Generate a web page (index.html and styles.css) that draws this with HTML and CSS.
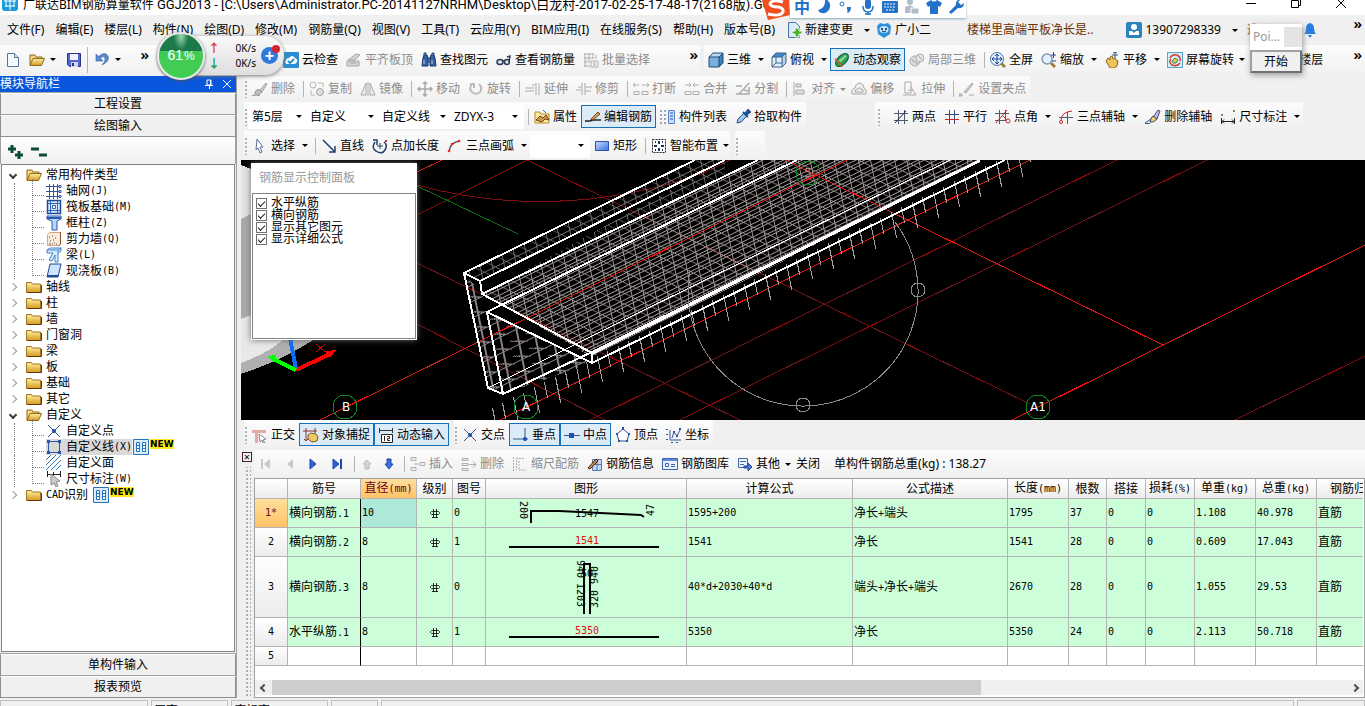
FILE: index.html
```html
<!DOCTYPE html>
<html lang="zh-CN">
<head>
<meta charset="utf-8">
<title>广联达BIM钢筋算量软件 GGJ2013</title>
<link rel="stylesheet" href="styles.css">
</head>

<body>
<!-- 图标库 -->
<svg class="sprite">
	<defs>
		<linearGradient id="gold" x2="0" y2="1"><stop offset="0" stop-color="#fff0a8"/><stop offset="1" stop-color="#d99a1e"/></linearGradient>
		<linearGradient id="blue" x2="1" y2="1"><stop offset="0" stop-color="#c9dcff"/><stop offset="1" stop-color="#3a6fe0"/></linearGradient>
	</defs>
	<symbol id="logo" viewBox="0 0 16 16"><rect width="16" height="16" rx="3" fill="#1c9bd8"/><path d="M8 1v14M2 6h12M3 11h10M4 4v8M12 4v8" stroke="#fff" fill="none"/></symbol>
	<symbol id="new" viewBox="0 0 16 16"><path d="M2.500 1.500h7l4 4v9h-11z" fill="#f4f9ff" stroke="#5a7394"/><path d="M9.500 1.500v4h4" fill="#cfe0f4" stroke="#5a7394"/></symbol>
	<symbol id="open" viewBox="0 0 16 16"><path d="M1 13V3h5l1 2h6v2" fill="#f6d77c" stroke="#8d6a1a"/><path d="M1 13.500l3-7h11.500l-3 7z" fill="url(#gold)" stroke="#8d6a1a"/></symbol>
	<symbol id="save" viewBox="0 0 16 16"><path d="M1.500 1.500h13v13h-11l-2-2z" fill="#5267c9" stroke="#28358a"/><path d="M4 2h8v6H4z" fill="#eef2ff"/><path d="M5 10h7v5H5z" fill="#cfd5e8"/><path d="M6 11h2v3H6z" fill="#28358a"/></symbol>
	<symbol id="undo" viewBox="0 0 16 16"><path d="M2 2v7h7l-2.500-2.500Q10 3 11 6q1 3-3 7 8-4 6-9Q11-1 4.500 4.500z" fill="#5b8ad0" stroke="#2f5c9e" stroke-width=".6"/></symbol>
	<symbol id="cloud" viewBox="0 0 16 16"><rect width="16" height="16" rx="1" fill="#2a8fd0"/><path d="M4 12q-3-1-1-4 0-2 3-2 3-4 6 0 3 1 2 4-1 2-3 2z" fill="#fff"/><path d="M5 9l2 2 4-4" fill="none" stroke="#2a8fd0" stroke-width="2"/></symbol>
	<symbol id="slab" viewBox="0 0 16 16"><path d="M1 14h12V9H1zM2 8l8-6 4 1-5 5zM4 11h6" fill="#d4d4d4" stroke="#a6a6a6"/></symbol>
	<symbol id="find" viewBox="0 0 16 16"><path d="M1 14l1-8 1-3h3l1 3v8zM9 14V6l1-3h3l1 3 1 8z" fill="#355f9f" stroke="#1d3a6a"/><path d="M7 6h2v4H7zM3 3V1h2v2M11 3V1h2v2" fill="#7aa2dc" stroke="#1d3a6a"/><path d="M3 8v4M11 8v4" stroke="#b7d2f5"/></symbol>
	<symbol id="glasses" viewBox="0 0 16 16"><ellipse cx="4" cy="10" rx="3" ry="2.500" fill="#dce8f4" stroke="#2d3c55" stroke-width="1.500"/><ellipse cx="11" cy="10" rx="2.500" ry="2.500" fill="#dce8f4" stroke="#2d3c55" stroke-width="1.500"/><path d="M7 9h2M13 10l1-6-3 1" fill="none" stroke="#2d3c55" stroke-width="1.500"/></symbol>
	<symbol id="batch" viewBox="0 0 16 16"><path d="M1 2h10M1 6h9M1 10h6M1 14h6M2 1v14M6 1v8M10 1v6M8 9h7v6H8zM10 11h3M10 13h3M13 3v4" fill="none" stroke="#adadad"/></symbol>
	<symbol id="cube" viewBox="0 0 16 16"><path d="M1 5l4-4h10l-4 4z" fill="#b7d9f3"/><path d="M1 5h10v10H1z" fill="#78b0e0"/><path d="M11 5l4-4v10l-4 4z" fill="#3f7fb8"/><path d="M1 5l4-4h10v10l-4 4H1zM1 5h10v10M11 5l4-4" fill="none" stroke="#214a73"/></symbol>
	<symbol id="topview" viewBox="0 0 16 16"><path d="M1 5l4-4h10l-4 4z" fill="#3f88c6"/><path d="M1 5h10v10H1z" fill="#e2eff9"/><path d="M11 5l4-4v10l-4 4z" fill="#b7cfe4"/><path d="M1 5l4-4h10v10l-4 4H1zM1 5h10v10M11 5l4-4M5 5v6h6M5 11l-4 4" fill="none" stroke="#3a648f"/></symbol>
	<symbol id="orbit" viewBox="0 0 16 16"><ellipse cx="8" cy="8" rx="8" ry="4.500" transform="rotate(-45 8 8)" fill="#2d9a55" stroke="#176338"/><path d="M4 9l7-6 2 1-6 6z" fill="#7be09a"/><path d="M1 7q5 3 7 8" fill="none" stroke="#d9542b" stroke-width="1.500"/></symbol>
	<symbol id="local3d" viewBox="0 0 16 16"><circle cx="6" cy="9" r="5" fill="#d9d9d9" stroke="#b0b0b0"/><circle cx="11" cy="6" r="4" fill="#e8e8e8" stroke="#b0b0b0"/><path d="M3 8l6 4M9 3l4 5" stroke="#a0a0a0"/></symbol>
	<symbol id="full" viewBox="0 0 16 16"><path d="M11 11l4 4" stroke="#a87a3c" stroke-width="3"/><circle cx="7" cy="7" r="6.500" fill="#e2f0ff" stroke="#54749c"/><path d="M7 2v10M2 7h10M5 4l2-2 2 2M5 10l2 2 2-2M4 5L2 7l2 2M10 5l2 2-2 2" fill="none" stroke="#1d4796"/></symbol>
	<symbol id="zoom" viewBox="0 0 16 16"><path d="M10 11l4 4" stroke="#a87a3c" stroke-width="3"/><circle cx="6" cy="7" r="5" fill="#e2f0ff" stroke="#8598b0" stroke-width="1.500"/><path d="M10 3h5M12.500 0v6M11 9h4" stroke="#1d4796"/></symbol>
	<symbol id="pan" viewBox="0 0 16 16"><path d="M2 9l2-3 2 2V5l2-1 1 3 2-1 1 2 2 1-1 5-3 2H6z" fill="#eec35c" stroke="#8d6320"/><path d="M11 0v6M8 3h6M9 1l2-1 2 1" stroke="#3b548b" fill="none"/></symbol>
	<symbol id="rotscr" viewBox="0 0 16 16"><rect x=".5" y=".5" width="15" height="15" fill="#cfeefa" stroke="#58a9c8"/><path d="M3 6q2-4 7-3 4 2 3 6M13 11q-3 4-8 2-4-3-1-6" fill="none" stroke="#da3c2f" stroke-width="1.500"/><path d="M5 9l3-3 3 2-2 3H6z" fill="#e9c14c" stroke="#3b8a45"/></symbol>
	<symbol id="brush" viewBox="0 0 16 16"><path d="M8 9l6-7 1 1-5 8z" fill="#ccc" stroke="#a5a5a5"/><path d="M3 14q-1-4 3-6l4 3q-3 4-7 3z" fill="#bdbdbd" stroke="#9b9b9b"/><path d="M0 14.500h3M5 14.500h3" stroke="#9b9b9b"/></symbol>
	<symbol id="copy" viewBox="0 0 16 16"><circle cx="4" cy="4" r="3" fill="none" stroke="#b5b5b5"/><circle cx="11" cy="11" r="3.500" fill="#ddd" stroke="#a5a5a5"/><path d="M9 2h5v4M2 9v5h4" fill="none" stroke="#b5b5b5"/></symbol>
	<symbol id="mirror" viewBox="0 0 16 16"><path d="M6 2v12H1zM10 2v12h5z" fill="#eee" stroke="#aaa"/><path d="M8 1v14" stroke="#aaa"/></symbol>
	<symbol id="move" viewBox="0 0 16 16"><path d="M8 1v14M1 8h14M6 3l2-2 2 2M6 13l2 2 2-2M3 6L1 8l2 2M13 6l2 2-2 2" fill="none" stroke="#aaa" stroke-width="1.500"/></symbol>
	<symbol id="rotate" viewBox="0 0 16 16"><path d="M4 3q-3 4-1 7 4 5 9 1 3-4-1-8M2 3h4v4" fill="none" stroke="#bbb" stroke-width="2"/></symbol>
	<symbol id="extend" viewBox="0 0 16 16"><path d="M0 7h9M0 10h9M11 2v12M14 2v12M7 4h3" stroke="#aaa"/></symbol>
	<symbol id="trim" viewBox="0 0 16 16"><path d="M0 9h5M9 6h7M9 10h6M6 2v12M9 2v12M2 6h3" stroke="#aaa"/></symbol>
	<symbol id="break" viewBox="0 0 16 16"><path d="M0 4h6M9 4h7M2 2L0 4l2 2M14 2l2 2-2 2M1 10.500h5v3H1zM9 10.500h6v3H9z" fill="none" stroke="#b0b0b0"/></symbol>
	<symbol id="merge" viewBox="0 0 16 16"><path d="M1 4h6M9 4h6M5 2l2 2-2 2M11 2L9 4l2 2M1 10.500h6v3H1zM9 10.500h6v3H9z" fill="none" stroke="#b0b0b0"/></symbol>
	<symbol id="split" viewBox="0 0 16 16"><path d="M1 5h6M1 13h13V6M4 13L14 2M9 9l4 1" fill="none" stroke="#aaa" stroke-width="1.500"/></symbol>
	<symbol id="align" viewBox="0 0 16 16"><path d="M2 1v14M4 3h5v3H4zM4 9h8v4H4z" fill="#ddd" stroke="#aaa"/></symbol>
	<symbol id="offset" viewBox="0 0 16 16"><path d="M1 13q-1-5 3-6 1-5 5-5 4 1 4 5 3 1 2 6z" fill="#eee" stroke="#aaa"/><path d="M4 11q0-3 3-3 1-3 3 0 3 0 2 3z" fill="none" stroke="#aaa"/></symbol>
	<symbol id="stretch" viewBox="0 0 16 16"><path d="M3 1h6v11H3zM9 6l5 8H1M6 9h5" fill="none" stroke="#aaa"/></symbol>
	<symbol id="grippt" viewBox="0 0 16 16"><path d="M5 11l8-9 1 1-7 9zM0 13h3v2H0zM10 14h5" fill="#ccc" stroke="#aaa"/></symbol>
	<symbol id="prop" viewBox="0 0 16 16"><path d="M1 3h5l1 2h8v9H1z" fill="#ffe9a2" stroke="#b58b2c"/><path d="M2 11l4-4 3 2 3-3 3 5-4-1-3 3z" fill="#cf9a4e" stroke="#6b4516"/><path d="M9 1l3 3" stroke="#3465a4"/></symbol>
	<symbol id="editbar" viewBox="0 0 16 16"><path d="M0 12h5l3-1h8" fill="none" stroke="#222" stroke-width="1.500"/><path d="M6 10l7-7 2 2-7 6z" fill="#d8a060" stroke="#69451c"/><path d="M5 11l2-2 1 2z" fill="#c22"/></symbol>
	<symbol id="list" viewBox="0 0 16 16"><path d="M0 2h2M0 6h2M0 10h2M0 14h2M4 2h2M4 6h2M4 10h2M4 14h2" stroke="#44587a"/><path d="M8.500 1.500h6v13h-6z" fill="#cadffd" stroke="#5884c8"/><path d="M10 4h3M10 7h3M10 10h3" stroke="#2b57a5"/></symbol>
	<symbol id="pick" viewBox="0 0 16 16"><path d="M2 14l1-4 6-6 3 3-6 6z" fill="#9cc6ee" stroke="#28517e"/><path d="M8 3l5 5M10 5l3-4 2 2-4 3" fill="#1d4f94" stroke="#1d4f94" stroke-width="2"/></symbol>
	<symbol id="ax1" viewBox="0 0 16 16"><path d="M1 4.500h14M1 11.500h14M5.500 1v14M11.500 1v14" stroke="#4b5876"/><path d="M2 14L13 2" stroke="#222"/></symbol>
	<symbol id="ax2" viewBox="0 0 16 16"><path d="M1 5.500h14M5.500 1v14M10.500 1v14" stroke="#354a7e"/><path d="M1 10.500h14" stroke="#c22"/></symbol>
	<symbol id="ax3" viewBox="0 0 16 16"><path d="M0 4.500h14M0 11.500h12M4.500 1v14M10.500 1v11" stroke="#4b5876"/><path d="M1 14L12 1M8 7l4 4" stroke="#c22"/><circle cx="13" cy="12" r="2" fill="#fff" stroke="#c22"/></symbol>
	<symbol id="ax4" viewBox="0 0 16 16"><path d="M3 12q0-9 11-10" fill="none" stroke="#c22"/><path d="M1 8.500h14M9.500 3v12" stroke="#4b5876"/><circle cx="3" cy="13" r="1.500" fill="#fff" stroke="#c22"/></symbol>
	<symbol id="axdel" viewBox="0 0 16 16"><path d="M8 8l5-7 2 1-3 8z" fill="#c8b5e0" stroke="#4c4c7c"/><path d="M5 13q1-5 3-6l4 3q-3 4-7 3z" fill="#e4d47b" stroke="#454545"/><path d="M0 14l6-4M0 14.500h5" stroke="#2b57a5"/></symbol>
	<symbol id="dim" viewBox="0 0 16 16"><path d="M1.500 9v6M14.500 9v6M2 12.500h12M4 10.500l-2 2 2 2M12 10.500l2 2-2 2" fill="none" stroke="#222"/><path d="M1 5h2v2H1zM13 1h2v2h-2z" fill="#5a9a4c"/></symbol>
	<symbol id="cursor" viewBox="0 0 16 16"><path d="M5 1l6 8H8l2 5-2 1-2-5-2 2z" fill="#fff" stroke="#5a6f94"/></symbol>
	<symbol id="line" viewBox="0 0 16 16"><path d="M2 2l11 11M14 8v6H8" fill="none" stroke="#20406f" stroke-width="1.500"/></symbol>
	<symbol id="ptlen" viewBox="0 0 16 16"><path d="M3 4q-4 6 1 9 6 4 9-1 3-5-1-8M1 2h4v5" fill="none" stroke="#243f6b" stroke-width="1.500"/><path d="M5 8h6M8 5v6" stroke="#243f6b"/><path d="M13 2h2v2h-2z" fill="#c22"/></symbol>
	<symbol id="arc" viewBox="0 0 16 16"><path d="M2 14Q3 4 13 3" fill="none" stroke="#555" stroke-width="1.500"/><circle cx="2" cy="13" r="1.300" fill="#e22"/><circle cx="5" cy="6" r="1.300" fill="#e22"/><circle cx="12" cy="3" r="1.300" fill="#e22"/></symbol>
	<symbol id="rect" viewBox="0 0 16 16"><path d="M1.500 3.500h13v9h-13z" fill="url(#blue)" stroke="#2f52a8"/></symbol>
	<symbol id="smart" viewBox="0 0 16 16"><path d="M1.500 1.500h13v13h-13z" fill="#fff" stroke="#222" stroke-dasharray="2 1"/><path d="M8 3v3M8 10v3M3 8h3M10 8h3" stroke="#1d3867" stroke-width="2"/><path d="M4 4h1M11 4h1M4 12h1M11 12h1" stroke="#1d3867" stroke-width="2"/></symbol>
	<symbol id="ortho" viewBox="0 0 16 16"><path d="M0 3h14v3H6v10H3V6H0z" fill="#e2a8a2"/><path d="M7 7l7 5-3 1 2 3-2 0-1-3-2 2z" fill="#fff" stroke="#888"/></symbol>
	<symbol id="snap" viewBox="0 0 16 16"><path d="M5 8l3-2 5 1 2 3-1 4-5 1-4-3z" fill="#eec96c" stroke="#7c5a1e"/><path d="M3 1v13M0 4h14M1 12l2 2 2-2M12 1v5" fill="none" stroke="#8c3030"/></symbol>
	<symbol id="dyn" viewBox="0 0 16 16"><path d="M1.500 1v5M14.500 1v5M1 3.500h14" stroke="#333"/><path d="M3.500 7.500h11v8h-11z" fill="#fff" stroke="#222"/><path d="M6.500 9v5M9 9.500h2.500v2H9.500v2H12" fill="none" stroke="#222"/></symbol>
	<symbol id="cross" viewBox="0 0 16 16"><path d="M2 2l12 12M14 2L2 14" stroke="#35538c"/><circle cx="8" cy="8" r="2" fill="#1c4fae"/></symbol>
	<symbol id="perp" viewBox="0 0 16 16"><path d="M0 12h15M12 1v13" stroke="#35538c"/><circle cx="12" cy="12" r="2" fill="#1c4fae"/></symbol>
	<symbol id="mid" viewBox="0 0 16 16"><path d="M0 8.500h16" stroke="#35538c"/><path d="M5 6h5v5H5z" fill="#1c4fae"/></symbol>
	<symbol id="vertex" viewBox="0 0 16 16"><path d="M8 2l6 5-2 7H4L2 7z" fill="#fff" stroke="#35538c"/><path d="M7 0h2v3H7zM1 6h2v2H1zM13 6h2v2h-2zM3 13h2v2H3zM11 13h2v2h-2z" fill="#2255aa"/></symbol>
	<symbol id="coord" viewBox="0 0 16 16"><path d="M4 3v10h11M6 11l2-6 3 4 3-6" fill="none" stroke="#35538c"/><path d="M0 2h2v1H0zM0 7h2v1H0zM0 12h2v1H0zM5 15h2v1H5zM10 15h2v1h-2zM13 1h2v2h-2zM7 4h2v2H7zM10 8h2v2h-2z" fill="#2255aa"/></symbol>
	<symbol id="first" viewBox="0 0 16 16"><path d="M3 3h2v10H3zM12 3v10L6 8z" fill="#c8c8c8"/></symbol>
	<symbol id="prev" viewBox="0 0 16 16"><path d="M11 3v10L5 8z" fill="#c8c8c8"/></symbol>
	<symbol id="next" viewBox="0 0 16 16"><path d="M4 3v10l6-5z" fill="#2c62d6" stroke="#1c45a6"/></symbol>
	<symbol id="last" viewBox="0 0 16 16"><path d="M3 3v10l6-5z" fill="#2c62d6" stroke="#1c45a6"/><path d="M11 3v10" stroke="#1c45a6" stroke-width="2"/></symbol>
	<symbol id="up" viewBox="0 0 16 16"><path d="M8 4l4 4h-2v5H6V8H4z" fill="#d4d4d4" stroke="#bbb"/></symbol>
	<symbol id="down" viewBox="0 0 16 16"><path d="M8 13l4-5h-2V3H6v5H4z" fill="#3b72e0" stroke="#1c45a6"/></symbol>
	<symbol id="ins" viewBox="0 0 16 16"><path d="M1 1.500h5v3H1zM1 11.500h5v3H1zM10 6.500h5v3h-5zM9 8H4" fill="#eee" stroke="#b0b0b0"/></symbol>
	<symbol id="del" viewBox="0 0 16 16"><path d="M1 2.500h6v2H1zM1 7.500h6v2H1zM1 12.500h6v2H1zM8 8.500h7M12 5.500l3 3-3 3" fill="#eee" stroke="#b0b0b0"/></symbol>
	<symbol id="scale" viewBox="0 0 16 16"><path d="M1.500 1v14M4.500 4v10M4 2.500h9M7 5v9h7" fill="none" stroke="#aaa" stroke-dasharray="2 1"/></symbol>
	<symbol id="info" viewBox="0 0 16 16"><path d="M5.500 3.500h9v11h-9z" fill="#c3d6f5" stroke="#5a78ab"/><path d="M10 3v11M6 8.500h9" stroke="#5a78ab"/><path d="M1 12l8-9 2 2-8 8z" fill="#c88a4c" stroke="#3c2710"/></symbol>
	<symbol id="lib" viewBox="0 0 16 16"><path d="M.5 2.500h15v11H.5z" fill="#eaf2ff" stroke="#3c67b0"/><path d="M1 3h14v2H1z" fill="#5f8cd8"/><path d="M3.500 7.500h3v3h-3zM9 8.500h4M9 10.500h4" fill="none" stroke="#3c67b0"/></symbol>
	<symbol id="other" viewBox="0 0 16 16"><path d="M1.500 2.500h9v9h-9z" fill="#eaf2ff" stroke="#4667a5"/><path d="M3 5.500h6M3 8.500h4" stroke="#4667a5"/><path d="M7 10h4V7l4 4-4 4v-3H7z" fill="#4f80e0" stroke="#1d3f93"/></symbol>
	<symbol id="change" viewBox="0 0 16 16"><path d="M2.500.5h7l4 4v11h-11z" fill="#d8ebff" stroke="#47759f"/><path d="M9 6h4v3h3v3h-3v3H9v-3H6V9h3z" fill="#46b52c" stroke="#fff"/></symbol>
	<symbol id="robot" viewBox="0 0 16 16"><path d="M1 4l3-3 4 1 4-1 3 3-1 8-6 4-6-4z" fill="#2b91dc"/><ellipse cx="8" cy="7.500" rx="4.500" ry="3.500" fill="#bfe5ff"/><circle cx="6" cy="7" r="1" fill="#124"/><circle cx="10" cy="7" r="1" fill="#124"/><path d="M6 9q2 2 4 0" fill="none" stroke="#124"/></symbol>
	<symbol id="user" viewBox="0 0 16 16"><rect width="16" height="16" rx="2" fill="#2b83bb"/><circle cx="8" cy="5" r="3" fill="#fff"/><path d="M3 13V9h3l2 2 2-2h3v4z" fill="#fff"/></symbol>
	<symbol id="bell" viewBox="0 0 16 16"><path d="M2 12q2-2 2-6 0-4 4-5 4 1 4 5 0 4 2 6zM6 13h4l-2 3z" fill="#2a7de0"/></symbol>
	<symbol id="folder" viewBox="0 0 16 16"><path d="M.5 13.500v-10h5l1 1.500h8v8.500z" fill="url(#gold)" stroke="#a0741c"/><path d="M1 13.500h14.500V6" fill="none" stroke="#5c400c"/></symbol>
	<symbol id="grid" viewBox="0 0 16 16"><path d="M0 3.500h13M0 8.500h13M0 13.500h13M3.500 1v15M7.500 1v15M11.500 1v15" stroke="#2e58a5"/><path d="M13 2.500h2v2h-2zM13 7.500h2v2h-2zM13 12.500h2v2h-2z" fill="none" stroke="#2e58a5"/></symbol>
	<symbol id="raft" viewBox="0 0 16 16"><path d="M1.500 1.500h13v13h-13z" fill="#dcebff" stroke="#1e4b96" stroke-width="1.500"/><path d="M4.500 2v12M11.500 2v12M2 4.500h12M2 11.500h12" fill="none" stroke="#2e62b5"/><path d="M6.500 6.500h3v3h-3z" fill="#fff" stroke="#2e62b5"/></symbol>
	<symbol id="column" viewBox="0 0 16 16"><path d="M1 1h14v3l-4 2v9H6V6L1 4z" fill="#b9d6ff" stroke="#2a5ba8"/><path d="M1 3h14" stroke="#2a5ba8" stroke-width="2"/></symbol>
	<symbol id="wall" viewBox="0 0 16 16"><path d="M1.500 3.500l2-2h11v11l-2 2h-11z" fill="#fbe9dc" stroke="#d5a583"/><path d="M14.500 1v12l-2 2" fill="none" stroke="#8c4c24"/><path d="M3 6h1M6 5h1M9 7h1M4 10h1M7 9h1M3 13h2M8 12h1M10 13h1M6 13h1" stroke="#555"/></symbol>
	<symbol id="beam" viewBox="0 0 16 16"><path d="M1 3l3-2h11v3l-3 2v9H9V8l-3 6-3-1 4-7H1z" fill="#d6ebff" stroke="#3e83c8"/><path d="M1 3h11l3-2M12 3v3" fill="none" stroke="#3e83c8"/></symbol>
	<symbol id="plate" viewBox="0 0 16 16"><path d="M4 1h11l-3 13H1z" fill="#cfe2ff" stroke="#1f4c97"/><path d="M1 13h11" stroke="#1f4c97" stroke-width="2"/></symbol>
	<symbol id="cline" viewBox="0 0 16 16"><path d="M2.500 2.500h11v11h-11z" fill="none" stroke="#2e58a5"/><path d="M1 1h3v3H1zM12 1h3v3h-3zM1 12h3v3H1zM12 12h3v3h-3z" fill="#2e58a5"/></symbol>
	<symbol id="cface" viewBox="0 0 16 16"><path d="M0 5l5-5M0 10L10 0M0 15L15 0M5 15L15 5M10 15l5-5" stroke="#2e78c5"/></symbol>
	<symbol id="cdim" viewBox="0 0 16 16"><path d="M1.500 0v6M14.500 0v6M1 3.500h13M7.500 1v4" stroke="#222"/><path d="M5 3l9 7-4 1 2 4-2 1-2-4-3 2z" fill="#ccc" stroke="#888"/></symbol>
	<symbol id="book" viewBox="0 0 16 16"><path d="M.5.5h15v15H.5z" fill="#d9edff" stroke="#2673b8"/><path d="M3.500 3.500h3v9h-3zM9.500 3.500h3v9h-3zM4 6.500h3M4 9.500h3M10 6.500h3M10 9.500h3" fill="#fff" stroke="#2673b8"/></symbol>
	<symbol id="steel" viewBox="0 0 12 12"><path d="M3.500 3.500h6l1 1v1l-1 1h-7l-1-1v-1l1-1zM4.500 1v9M7.500 1v9M3 9.500h6" fill="none" stroke="#000" stroke-width=".8"/></symbol>
</svg>

<header class="titlebar">
	<svg class="ico"><use href="#logo"/></svg>
	<h1>广联达BIM钢筋算量软件 <span>GGJ2013 - [C:\Users\Administrator.PC-20141127NRHM\Desktop\白龙村-2017-02-25-17-48-17(2168版).GGJ</span></h1>
	<div class="winbtns">
		<button aria-label="最小化"><svg viewBox="0 0 12 12"><path d="M1 6.500h10"/></svg></button>
		<button aria-label="还原"><svg viewBox="0 0 12 12"><path d="M1.500 3.500h7v7h-7zM3.500 3V.500h7v8H9"/></svg></button>
		<button aria-label="关闭"><svg viewBox="0 0 12 12"><path d="M1 1l10 10M11 1L1 11"/></svg></button>
	</div>
</header>

<nav class="menubar">
	<a href="#">文件(F)</a>
	<a href="#">编辑(E)</a>
	<a href="#">楼层(L)</a>
	<a href="#">构件(N)</a>
	<a href="#">绘图(D)</a>
	<a href="#">修改(M)</a>
	<a href="#">钢筋量(Q)</a>
	<a href="#">视图(V)</a>
	<a href="#">工具(T)</a>
	<a href="#">云应用(Y)</a>
	<a href="#">BIM应用(I)</a>
	<a href="#">在线服务(S)</a>
	<a href="#">帮助(H)</a>
	<a href="#">版本号(B)</a>
	<button class="tool"><svg class="ico"><use href="#change"/></svg>新建变更</button><button class="dd" aria-label="更多"></button>
	<button class="tool"><svg class="ico"><use href="#robot"/></svg>广小二</button>
	<a class="tip" href="#">楼梯里高端平板净长是..</a>
	<div class="account">
		<button class="tool"><svg class="ico"><use href="#user"/></svg>13907298339</button><button class="dd" aria-label="账号"></button>
		<a class="beans" href="#">造价豆</a>
		<svg class="ico"><use href="#bell"/></svg>
	</div>
	<span class="more">»</span>
</nav>

<div class="toolbar top">
	<div class="group file">
		<button class="tool"><svg class="ico"><use href="#new"/></svg></button>
		<button class="tool"><svg class="ico"><use href="#open"/></svg></button><button class="dd" aria-label="打开"></button>
		<button class="tool"><svg class="ico"><use href="#save"/></svg></button>
		<i class="sep"></i>
		<button class="tool"><svg class="ico"><use href="#undo"/></svg></button><button class="dd" aria-label="撤销"></button>
		<span class="more">»</span>
	</div>
	<div class="group check">
		<button class="tool"><svg class="ico"><use href="#cloud"/></svg>云检查</button>
		<button class="tool" disabled><svg class="ico"><use href="#slab"/></svg>平齐板顶</button>
		<button class="tool"><svg class="ico"><use href="#find"/></svg>查找图元</button>
		<button class="tool"><svg class="ico"><use href="#glasses"/></svg>查看钢筋量</button>
		<button class="tool" disabled><svg class="ico"><use href="#batch"/></svg>批量选择</button>
		<span class="more">»</span>
	</div>
	<div class="group view">
		<button class="tool"><svg class="ico"><use href="#cube"/></svg>三维</button><button class="dd" aria-label="三维"></button>
		<button class="tool"><svg class="ico"><use href="#topview"/></svg>俯视</button><button class="dd" aria-label="俯视"></button>
		<button class="tool on"><svg class="ico"><use href="#orbit"/></svg>动态观察</button>
		<button class="tool" disabled><svg class="ico"><use href="#local3d"/></svg>局部三维</button>
		<i class="sep"></i>
		<button class="tool"><svg class="ico"><use href="#full"/></svg>全屏</button>
		<button class="tool"><svg class="ico"><use href="#zoom"/></svg>缩放</button><button class="dd" aria-label="缩放"></button>
		<button class="tool"><svg class="ico"><use href="#pan"/></svg>平移</button><button class="dd" aria-label="平移"></button>
		<button class="tool"><svg class="ico"><use href="#rotscr"/></svg>屏幕旋转</button><button class="dd small" aria-label="旋转"></button>
		<button class="tool pickfloor"><svg class="ico"><use href="#list"/></svg>选择楼层</button>
		<span class="more">»</span>
	</div>
</div>

<div class="main">
	<aside class="sidebar">
		<div class="side-title">
			<h2>模块导航栏</h2>
			<button aria-label="固定"><svg viewBox="0 0 10 10"><path d="M3 1h4v5H3zM1 6.500h8M5.500 7v3M6.500 1v5"/></svg></button>
			<button aria-label="关闭"><svg viewBox="0 0 10 10"><path d="M1 1l8 8M9 1L1 9"/></svg></button>
		</div>
		<button class="tab">工程设置</button>
		<button class="tab">绘图输入</button>
		<div class="side-tools">
			<button aria-label="全部展开"><svg viewBox="0 0 18 16"><path d="M4 1v8M0 5h8M11 7v8M7 11h8"/></svg></button>
			<button aria-label="全部折叠"><svg viewBox="0 0 18 16"><path d="M0 5h8M8 11h8"/></svg></button>
		</div>
		<ul class="tree">
			<li><i class="tw open"></i><svg class="ico"><use href="#open"/></svg>常用构件类型
				<ul>
					<li><svg class="ico"><use href="#grid"/></svg>轴网<span class="n">(J)</span></li>
					<li><svg class="ico"><use href="#raft"/></svg>筏板基础<span class="n">(M)</span></li>
					<li><svg class="ico"><use href="#column"/></svg>框柱<span class="n">(Z)</span></li>
					<li><svg class="ico"><use href="#wall"/></svg>剪力墙<span class="n">(Q)</span></li>
					<li><svg class="ico"><use href="#beam"/></svg>梁<span class="n">(L)</span></li>
					<li><svg class="ico"><use href="#plate"/></svg>现浇板<span class="n">(B)</span></li>
				</ul>
			</li>
			<li><i class="tw"></i><svg class="ico"><use href="#folder"/></svg>轴线</li>
			<li><i class="tw"></i><svg class="ico"><use href="#folder"/></svg>柱</li>
			<li><i class="tw"></i><svg class="ico"><use href="#folder"/></svg>墙</li>
			<li><i class="tw"></i><svg class="ico"><use href="#folder"/></svg>门窗洞</li>
			<li><i class="tw"></i><svg class="ico"><use href="#folder"/></svg>梁</li>
			<li><i class="tw"></i><svg class="ico"><use href="#folder"/></svg>板</li>
			<li><i class="tw"></i><svg class="ico"><use href="#folder"/></svg>基础</li>
			<li><i class="tw"></i><svg class="ico"><use href="#folder"/></svg>其它</li>
			<li><i class="tw open"></i><svg class="ico"><use href="#open"/></svg>自定义
				<ul>
					<li><svg class="ico"><use href="#cross"/></svg>自定义点</li>
					<li><span class="sel"><svg class="ico"><use href="#cline"/></svg>自定义线<span class="n">(X)</span></span><svg class="ico book"><use href="#book"/></svg><b class="new">NEW</b></li>
					<li><svg class="ico"><use href="#cface"/></svg>自定义面</li>
					<li><svg class="ico"><use href="#cdim"/></svg>尺寸标注<span class="n">(W)</span></li>
				</ul>
			</li>
			<li><i class="tw"></i><svg class="ico"><use href="#folder"/></svg><span class="n">CAD</span>识别<svg class="ico book gap"><use href="#book"/></svg><b class="new">NEW</b></li>
		</ul>
		<button class="tab">单构件输入</button>
		<button class="tab">报表预览</button>
	</aside>

	<section class="work">
		<div class="toolbar edit">
			<div class="group">
				<i class="grip"></i>
				<button class="tool" disabled><svg class="ico"><use href="#brush"/></svg>删除</button>
				<i class="sep"></i>
				<button class="tool" disabled><svg class="ico"><use href="#copy"/></svg>复制</button>
				<button class="tool" disabled><svg class="ico"><use href="#mirror"/></svg>镜像</button>
				<i class="sep"></i>
				<button class="tool" disabled><svg class="ico"><use href="#move"/></svg>移动</button>
				<button class="tool" disabled><svg class="ico"><use href="#rotate"/></svg>旋转</button>
				<i class="sep"></i>
				<button class="tool" disabled><svg class="ico"><use href="#extend"/></svg>延伸</button>
				<button class="tool" disabled><svg class="ico"><use href="#trim"/></svg>修剪</button>
				<i class="sep"></i>
				<button class="tool" disabled><svg class="ico"><use href="#break"/></svg>打断</button>
				<button class="tool" disabled><svg class="ico"><use href="#merge"/></svg>合并</button>
				<button class="tool" disabled><svg class="ico"><use href="#split"/></svg>分割</button>
				<i class="sep"></i>
				<button class="tool" disabled><svg class="ico"><use href="#align"/></svg>对齐</button><button class="dd small" disabled aria-label="对齐"></button>
				<button class="tool" disabled><svg class="ico"><use href="#offset"/></svg>偏移</button>
				<button class="tool" disabled><svg class="ico"><use href="#stretch"/></svg>拉伸</button>
				<i class="sep"></i>
				<button class="tool" disabled><svg class="ico"><use href="#grippt"/></svg>设置夹点</button>
			</div>
		</div>

		<div class="toolbar">
			<div class="group">
				<i class="grip"></i>
				<label class="combo floor"><select aria-label="楼层"><option>第5层</option></select></label>
				<label class="combo"><select aria-label="构件类别"><option>自定义</option></select></label>
				<label class="combo"><select aria-label="构件类型"><option>自定义线</option></select></label>
				<label class="combo"><select aria-label="构件名称"><option>ZDYX-3</option></select></label>
				<i class="sep"></i>
				<button class="tool"><svg class="ico"><use href="#prop"/></svg>属性</button>
				<button class="tool on"><svg class="ico"><use href="#editbar"/></svg>编辑钢筋</button>
				<button class="tool"><svg class="ico"><use href="#list"/></svg>构件列表</button>
				<button class="tool"><svg class="ico"><use href="#pick"/></svg>拾取构件</button>
			</div>
			<div class="group axis">
				<i class="grip"></i>
				<button class="tool"><svg class="ico"><use href="#ax1"/></svg>两点</button>
				<button class="tool"><svg class="ico"><use href="#ax2"/></svg>平行</button>
				<button class="tool"><svg class="ico"><use href="#ax3"/></svg>点角</button><button class="dd" aria-label="点角"></button>
				<button class="tool"><svg class="ico"><use href="#ax4"/></svg>三点辅轴</button><button class="dd" aria-label="三点辅轴"></button>
				<button class="tool"><svg class="ico"><use href="#axdel"/></svg>删除辅轴</button>
				<button class="tool"><svg class="ico"><use href="#dim"/></svg>尺寸标注</button><button class="dd" aria-label="尺寸标注"></button>
			</div>
		</div>

		<div class="toolbar">
			<div class="group">
				<i class="grip"></i>
				<button class="tool"><svg class="ico"><use href="#cursor"/></svg>选择</button><button class="dd" aria-label="选择"></button>
				<i class="sep"></i>
				<button class="tool"><svg class="ico"><use href="#line"/></svg>直线</button>
				<button class="tool"><svg class="ico"><use href="#ptlen"/></svg>点加长度</button>
				<button class="tool"><svg class="ico"><use href="#arc"/></svg>三点画弧</button><button class="dd" aria-label="三点画弧"></button>
				<label class="combo floor"><select aria-label="画弧方式"><option></option></select></label>
				<button class="tool"><svg class="ico"><use href="#rect"/></svg>矩形</button>
				<i class="sep"></i>
				<button class="tool"><svg class="ico"><use href="#smart"/></svg>智能布置</button><button class="dd small" aria-label="智能布置"></button>
			</div>
			<div class="group blank"><i class="grip"></i></div>
		</div>

		<div class="canvas">
			<svg class="scene" viewBox="241 160 1124 260" preserveAspectRatio="xMinYMin slice">
				<defs>
					<pattern id="mesh" width="11" height="12" patternUnits="userSpaceOnUse" patternTransform="matrix(1 -.49 .2 1 487 312)">
						<path d="M0 2h11M0 6h11M0 9h11M3 0v12M0 0l11 12" fill="none" stroke="#a59a9a"/>
					</pattern>
					<pattern id="mesh2" width="11" height="12" patternUnits="userSpaceOnUse" patternTransform="matrix(1 -.49 .2 1 480 281)">
						<path d="M0 6h11M3 0v12M0 0l11 12" fill="none" stroke="#8b8383" stroke-width=".8"/>
					</pattern>
					<pattern id="mesh3" width="16" height="15" patternUnits="userSpaceOnUse" patternTransform="matrix(1 -.49 .2 1 503 394)">
						<path d="M0 7h16M8 0v15M0 0l16 8" fill="none" stroke="#8b8383"/>
					</pattern>
				</defs>
				<!-- 远处的灰色实体 -->
				<path d="M241 165l10 4v50l-10 4z" fill="#e4e4e4"/>
				<path d="M241 219l10-5v102l-10 3z" fill="#aaa"/>
				<path d="M241 319l10-4 60 22-21 9-49 17z" fill="#e8e8e8"/>
				<path d="M241 363q25-9 42-23h30q-30 20-72 34z" fill="#b0b0b0"/>
				<!-- 轴线 -->
				<g class="dim">
					<path d="M417 263L740 420M417 324L605 420M527 160L1030 404"/>
					<path d="M590 420L1117 160M680 420L1207 160M1235 420L1365 356M417 215L527 160"/>
					<path d="M417 185Q500 208 590 199Q680 188 730 160"/>
				</g>
				<path class="green" d="M417 186L518 234"/>
				<path d="M480 281L725 160H695L464 273zM482 294L725 175V160z" fill="url(#mesh2)"/>
				<path d="M483 294L758 160H985L592 357z" fill="url(#mesh)"/>
				<path d="M487 312L592 363L503 394z" fill="url(#mesh3)"/>
				<path d="M466 275L482 294L503 394L488 388z" fill="url(#mesh3)"/>
				<g class="bright">
					<path d="M320 420L847 160M500 420L1030 160M785 160L1163 345M1012 420L1365 245M417 172L442 160"/>
				</g>
				<!-- 钢筋端头 -->
				<g class="ticks" transform="matrix(1 -.49 .2 1 492 408)">
					<path d="M0 13H540" stroke-width="26" stroke-dasharray="1 20"/>
					<path d="M10 8H540" stroke-width="16" stroke-dasharray="1 20"/>
				</g>
				<g class="solid">
					<path d="M464 273L695 160M480 281L725 160M482 294L758 160M487 312L797 160M592 363L1005 160"/>
					<path d="M464 273L480 281L482 294L592 353V363L487 312L503 394L488 388z"/>
					<path d="M503 394L592 352L980 160M592 354L980 161"/>
					<path class="thin" d="M488 388L640 312L950 160"/>
				</g>
				<!-- 动态观察圆 -->
				<g class="ring">
					<path d="M895 222A115 115 0 1 1 690 270"/>
					<circle cx="918" cy="290" r="7"/><circle cx="803" cy="405" r="7"/>
				</g>
				<g class="mark">
					<circle cx="345" cy="407" r="12"/><circle cx="526" cy="407" r="12"/><circle cx="1038" cy="407" r="12"/><circle cx="808" cy="173" r="12"/>
					<text x="346" y="411">B</text><text x="526" y="411">A</text><text x="1038" y="411">A1</text><text x="808" y="177" class="faint">5</text>
				</g>
				<g class="compass">
					<path d="M290 338L296 369" stroke="#0a6cff"/>
					<path d="M296 370L328 355" stroke="#f00"/>
					<path d="M296 370L275 360" stroke="#0f0"/>
					<path d="M325 351l11-1-6 8z" fill="#f00"/><path d="M276 355l-9 1 7 7z" fill="#0f0"/>
					<path d="M316 344l9 8M325 344l-9 8" stroke="#c00" stroke-width="1"/>
				</g>
			</svg>
			<form class="ctrl">
				<h3>钢筋显示控制面板</h3>
				<div class="opts">
					<label><input type="checkbox" checked>水平纵筋</label>
					<label><input type="checkbox" checked>横向钢筋</label>
					<label><input type="checkbox" checked>显示其它图元</label>
					<label><input type="checkbox" checked>显示详细公式</label>
				</div>
			</form>
		</div>

		<div class="toolbar">
			<div class="group">
				<i class="grip"></i>
				<button class="tool"><svg class="ico"><use href="#ortho"/></svg>正交</button>
				<button class="tool on"><svg class="ico"><use href="#snap"/></svg>对象捕捉</button>
				<button class="tool on"><svg class="ico"><use href="#dyn"/></svg>动态输入</button>
			</div>
			<div class="group snaps">
				<i class="grip"></i>
				<button class="tool"><svg class="ico"><use href="#cross"/></svg>交点</button>
				<button class="tool on"><svg class="ico"><use href="#perp"/></svg>垂点</button>
				<button class="tool on"><svg class="ico"><use href="#mid"/></svg>中点</button>
				<button class="tool"><svg class="ico"><use href="#vertex"/></svg>顶点</button>
				<button class="tool"><svg class="ico"><use href="#coord"/></svg>坐标</button>
			</div>
		</div>

		<div class="dock">
			<div class="gutter"><button aria-label="关闭面板">×</button></div>
			<div class="panel">
				<div class="rowbar">
					<button class="tool" aria-label="第一条"><svg class="ico"><use href="#first"/></svg></button>
					<button class="tool" aria-label="上一条"><svg class="ico"><use href="#prev"/></svg></button>
					<button class="tool" aria-label="下一条"><svg class="ico"><use href="#next"/></svg></button>
					<button class="tool" aria-label="最后一条"><svg class="ico"><use href="#last"/></svg></button>
					<i class="sep"></i>
					<button class="tool mv" aria-label="上移"><svg class="ico"><use href="#up"/></svg></button>
					<button class="tool mv" aria-label="下移"><svg class="ico"><use href="#down"/></svg></button>
					<i class="sep"></i>
					<button class="tool" disabled><svg class="ico"><use href="#ins"/></svg>插入</button>
					<button class="tool" disabled><svg class="ico"><use href="#del"/></svg>删除</button>
					<button class="tool" disabled><svg class="ico"><use href="#scale"/></svg>缩尺配筋</button>
					<button class="tool"><svg class="ico"><use href="#info"/></svg>钢筋信息</button>
					<button class="tool"><svg class="ico"><use href="#lib"/></svg>钢筋图库</button>
					<button class="tool"><svg class="ico"><use href="#other"/></svg>其他</button><button class="dd small" aria-label="其他"></button>
					<button class="tool">关闭</button>
					<span class="total">单构件钢筋总重(kg) : 138.27</span>
				</div>
				<div class="sheet">
					<div class="clip">
					<table>
						<colgroup><col class="w33"><col class="w73"><col class="w56"><col class="w36"><col class="w33"><col class="w201"><col class="w166"><col class="w155"><col class="w61"><col class="w38"><col class="w39"><col class="w49"><col class="w61"><col class="w61"><col></colgroup>
						<thead>
							<tr><th></th><th>筋号</th><th class="cur">直径<span class="n">(mm)</span></th><th>级别</th><th>图号</th><th>图形</th><th>计算公式</th><th>公式描述</th><th>长度<span class="n">(mm)</span></th><th>根数</th><th>搭接</th><th>损耗<span class="n">(%)</span></th><th>单重<span class="n">(kg)</span></th><th>总重<span class="n">(kg)</span></th><th>钢筋归类</th></tr>
						</thead>
						<tbody>
							<tr><th class="n cur">1*</th><td>横向钢筋<span class="n">.1</span></td><td class="n edit">10</td><td class="c"><svg><use href="#steel"/></svg></td><td class="n">0</td>
								<td class="shape"><svg viewBox="0 0 200 28"><path d="M45 24V12h28l82 4 3 2"/><text x="101" y="18">1547</text><text transform="translate(34 11) rotate(90)">200</text><text transform="translate(168 11) rotate(-90)">47</text></svg></td>
								<td class="n">1595+200</td><td>净长<span class="n">+</span>端头</td><td class="n">1795</td><td class="n">37</td><td class="n">0</td><td class="n">0</td><td class="n">1.108</td><td class="n">40.978</td><td>直筋</td></tr>
							<tr><th class="n">2</th><td>横向钢筋<span class="n">.2</span></td><td class="n">8</td><td class="c"><svg><use href="#steel"/></svg></td><td class="n">1</td>
								<td class="shape"><svg viewBox="0 0 200 28"><path d="M23 19h150"/><text x="101" y="16" class="red">1541</text></svg></td>
								<td class="n">1541</td><td>净长</td><td class="n">1541</td><td class="n">28</td><td class="n">0</td><td class="n">0</td><td class="n">0.609</td><td class="n">17.043</td><td>直筋</td></tr>
							<tr class="tall"><th class="n">3</th><td>横向钢筋<span class="n">.3</span></td><td class="n">8</td><td class="c"><svg><use href="#steel"/></svg></td><td class="n">0</td>
								<td class="shape"><svg viewBox="0 0 200 60"><path d="M98 57V7h6v50"/><text transform="translate(91 38) rotate(90)">1203</text><text transform="translate(91 12) rotate(90)">940</text><text x="101" y="20">50</text><text transform="translate(112 18) rotate(-90)">940</text><text transform="translate(112 42) rotate(-90)">320</text></svg></td>
								<td class="n">40*d+2030+40*d</td><td>端头<span class="n">+</span>净长<span class="n">+</span>端头</td><td class="n">2670</td><td class="n">28</td><td class="n">0</td><td class="n">0</td><td class="n">1.055</td><td class="n">29.53</td><td>直筋</td></tr>
							<tr><th class="n">4</th><td>水平纵筋<span class="n">.1</span></td><td class="n">8</td><td class="c"><svg><use href="#steel"/></svg></td><td class="n">1</td>
								<td class="shape"><svg viewBox="0 0 200 28"><path d="M23 19h150"/><text x="101" y="16" class="red">5350</text></svg></td>
								<td class="n">5350</td><td>净长</td><td class="n">5350</td><td class="n">24</td><td class="n">0</td><td class="n">0</td><td class="n">2.113</td><td class="n">50.718</td><td>直筋</td></tr>
							<tr class="empty"><th class="n">5</th><td></td><td></td><td></td><td></td><td></td><td></td><td></td><td></td><td></td><td></td><td></td><td></td><td></td><td></td></tr>
						</tbody>
					</table>
					</div>
					<div class="hscroll"><button aria-label="向左"><i class="chev left"></i></button><div class="track"><div class="thumb"></div></div><button aria-label="向右"><i class="chev"></i></button></div>
				</div>
			</div>
		</div>
	</section>
</div>

<footer class="status">
	<span class="s1"></span>
	<span class="s2">层高:</span>
	<span class="s3">底标高:</span>
	<span class="s4">(0)</span>
	<span class="s5"></span>
	<span class="s6"></span>
</footer>

<!-- 悬浮的小窗口 -->
<div class="ime">
	<svg class="sogou" viewBox="0 0 28 20"><path d="M0 0h27l1 15-22 5z" fill="#f04e1c"/><path d="M21 2q-12-3-13 2 1 3 8 3 6 1 5 5-3 5-15 2" fill="none" stroke="#fff" stroke-width="3"/></svg>
	<div class="ime-bar">
		<b>中</b>
		<svg viewBox="0 0 16 16"><path d="M9 0q1 9-7 11 2 4 7 3 6-3 5-9-1-4-5-5z"/></svg>
		<svg viewBox="0 0 16 16"><circle cx="4" cy="5" r="2" fill="none" stroke="#2472c8"/><path d="M9 8h4q0 4-3 6l-1-1 1-2H9z"/></svg>
		<svg viewBox="0 0 16 16"><rect x="5" y="0" width="6" height="10" rx="3"/><path d="M3 7q0 6 5 6t5-6M8 13v3M5 15h6" fill="none" stroke="#2472c8" stroke-width="1.500"/></svg>
		<svg viewBox="0 0 16 16"><rect y="2" width="16" height="12" rx="1"/><path d="M2 5h12M2 8h12M4 11h8" stroke="#fff" stroke-dasharray="2 1"/></svg>
		<svg class="off" viewBox="0 0 16 16"><circle cx="6" cy="3" r="3"/><path d="M1 14V8q5-3 9 0v6z"/><path d="M7 9h8v6H7z" stroke="#fff"/></svg>
		<svg viewBox="0 0 16 16"><path d="M0 4l5-3q3 3 6 0l5 3-2 4-2-1v8H4V7L2 8z"/></svg>
		<svg viewBox="0 0 16 16"><path d="M1 13l7-7q-1-5 5-6l-3 3 3 3 3-2q0 6-6 5l-7 6z"/></svg>
	</div>
</div>

<div class="net">
	<div class="ball">61<small>%</small></div>
	<div class="arrows"><span class="u">↑</span><span class="d">↓</span></div>
	<div class="speed"><span>0K/s</span><span>0K/s</span></div>
	<button aria-label="加速">+</button>
</div>

<div class="poi">
	<div class="poi-title">Poi...<i></i></div>
	<button>开始</button>
</div>
</body>
</html>
```

FILE: styles.css
```css
*
{
	box-sizing:border-box;
	margin:0;
	padding:0;
}
body
{
	display:flex;
	flex-direction:column;
	height:100vh;
	overflow:hidden;
	position:relative;
	background:#f0f0f0;
	color:#000;
	font:12px/16px "Noto Sans", "Noto Sans CJK SC", sans-serif;
	white-space:nowrap;
}
button, select, input
{
	font:inherit;
	color:inherit;
	border:0;
	background:none;
}
a
{
	color:inherit;
	text-decoration:none;
}
i { font-style:normal; }
.sprite
{
	position:absolute;
	width:0;
	height:0;
}
.ico
{
	flex:none;
	width:16px;
	height:16px;
}
/* 等宽的数字和字母 */
.n { font-family:"DejaVu Sans Mono", "Noto Sans CJK SC", monospace; font-size:10px; }

/* 标题栏 */
.titlebar
{
	display:flex;
	align-items:flex-end;
	height:15px;
	flex:none;
	padding-left:2px;
	background:#fff;
	overflow:hidden;
}
.titlebar .ico { margin-bottom:4px; }
.titlebar h1
{
	flex:1;
	margin-left:5px;
	font-size:12px;
	font-weight:normal;
	line-height:18px;
	margin-bottom:1px;
}
.titlebar h1 span { font-family:Roboto, "Noto Sans CJK SC", sans-serif; font-size:13px; }
.winbtns
{
	display:flex;
	gap:33px;
	margin-right:18px;
	margin-bottom:6px;
}
.winbtns button, .winbtns svg
{
	display:block;
	width:12px;
	height:12px;
}
.winbtns svg { fill:none; stroke:#000; }

/* 菜单 */
.menubar
{
	display:flex;
	align-items:center;
	gap:11px;
	height:30px;
	flex:none;
	padding-left:7px;
	position:relative;
}
.menubar .tool { margin-right:-11px; padding:0 4px 0 0; }
.menubar .dd { margin-right:-8px; margin-left:4px; }
.menubar .tip { margin-left:32px; color:#6b3000; }
.account
{
	display:flex;
	align-items:center;
	gap:11px;
	margin-left:auto;
	margin-right:47px;
}
.account .beans { color:#a33c00; margin-left:3px; }
.account .ico:last-child { margin-left:8px; }
.more
{
	font-size:15px;
	line-height:16px;
	font-weight:600;
	margin-bottom:12px;
}
.menubar .more
{
	position:absolute;
	right:3px;
	top:0;
}

/* 工具条 */
.toolbar
{
	display:flex;
	height:29px;
	flex:none;
	padding-left:3px;
}
.toolbar.edit { height:26px; }
.toolbar.top { height:31px; padding-left:0; }
.toolbar.top .group { padding-bottom:2px; }
.group
{
	display:flex;
	align-items:center;
	background:linear-gradient(#fcfcfc, #f0f0f0);
}
.tool
{
	display:flex;
	align-items:center;
	gap:3px;
	height:23px;
	padding:0 4px;
	flex:none;
}
.tool:disabled { color:#8c8c8c; }
.tool.on
{
	background:#dcebf8;
	box-shadow:inset 0 0 0 1px #1771b8;
}
.tool.mv { padding:0 3px; }
.dd
{
	flex:none;
	width:12px;
	height:20px;
	display:flex;
	align-items:center;
	justify-content:center;
}
.dd.small { width:8px; }
.dd::after, .combo::after
{
	content:"";
	border:3px solid transparent;
	border-top-color:#000;
	border-bottom:0;
}
.dd:disabled::after { border-top-color:#8c8c8c; }
.sep
{
	flex:none;
	width:1px;
	height:16px;
	margin:0 1px 0 4px;
	background:#b4b4b4;
}
.grip
{
	flex:none;
	width:4px;
	height:18px;
	background:radial-gradient(circle at 2px 2px, #b0b0b0 1px, transparent 1px) 0 0/4px 4px repeat-y;
}
.combo
{
	display:flex;
	align-items:center;
	width:72px;
	height:24px;
	padding-right:6px;
	background:#fff;
}
.combo select
{
	appearance:none;
	flex:1;
	min-width:0;
	padding-left:2px;
	outline:0;
}
.combo.floor { width:60px; padding-left:2px; }
.group.file { width:157px; padding-left:1px; }
.file .dd { margin:0 3px 0 -2px; }
.file .sep { margin:0 2px 0 1px; height:26px; }
.group .more { margin-left:auto; }
.file .more { margin-right:8px; }
.group.check { margin-left:122px; width:421px; padding-right:2px; }
.group.view { flex:1; margin-left:4px; padding-right:3px; }
.pickfloor { margin-left:6px; }
.group.axis { margin-left:69px; }
.axis .grip { margin:0 8px 0 2px; }
.group.blank, .group.snaps { margin-left:5px; }
.group.blank { width:30px; }

/* 主体 */
.main
{
	display:flex;
	flex:1;
	min-height:0;
}
.sidebar
{
	display:flex;
	flex-direction:column;
	width:237px;
	flex:none;
	border-right:1px solid #a0a0a0;
	margin-right:4px;
}
.side-title
{
	display:flex;
	align-items:center;
	gap:8px;
	height:16px;
	padding-right:4px;
	background:#0a56dc;
	color:#fff;
}
.side-title h2
{
	flex:1;
	font-size:12px;
	line-height:16px;
	font-weight:normal;
}
.side-title button, .side-title svg
{
	display:block;
	width:10px;
	height:10px;
}
.side-title svg { fill:none; stroke:#fff; }
.tab
{
	height:22px;
	flex:none;
	border:1px solid #8e8e8e;
	border-top-color:#fff;
	box-shadow:0 -1px #a0a0a0;
	background:#f0f0f0;
}
.side-title + .tab { margin-top:1px; }
.side-tools
{
	display:flex;
	align-items:center;
	gap:5px;
	height:27px;
	padding:3px 7px 0;
	border:1px solid #a0a0a0;
	border-width:0 1px;
	background:linear-gradient(#fff, #f0f0f0);
}
.side-tools svg
{
	display:block;
	width:18px;
	height:16px;
	stroke:#0c4a3a;
	stroke-width:3px;
}
.tree
{
	flex:1;
	list-style:none;
	margin:0 1px 2px;
	padding-top:2px;
	border:1px solid #828282;
	background:#fff;
}
.tree ul
{
	list-style:none;
	flex-basis:100%;
	padding-left:4px;
}
.tree li
{
	display:flex;
	flex-wrap:wrap;
	align-items:center;
	line-height:16px;
	padding-left:8px;
}
.tree li .ico { margin-right:4px; }
.tree ul li
{
	padding-left:0;
	border-left:1px dotted #808080;
}
.tree ul li::before
{
	content:"";
	width:11px;
	height:16px;
	margin:-8px 2px 0 17px;
	border:1px dotted #808080;
	border-width:0 0 1px 1px;
}
.tw
{
	width:6px;
	height:6px;
	margin:0 10px 0 0;
	border:1px solid #a0a0a0;
	border-width:1px 1px 0 0;
	transform:rotate(45deg);
}
.tw.open { transform:rotate(135deg); border-color:#404040; border-width:2px 2px 0 0; }
.sel
{
	display:flex;
	align-items:center;
	height:16px;
	background:#d9d9d9;
}
.tree li .book { margin:0 1px; }
.tree li .book.gap { margin-left:5px; }
.new
{
	font:bold 9px/10px "DejaVu Sans", sans-serif;
	background:#ffe81a;
	margin-bottom:6px;
}

.work
{
	display:flex;
	flex-direction:column;
	flex:1;
	min-width:0;
}
.canvas
{
	position:relative;
	height:260px;
	flex:none;
	background:#000;
	overflow:hidden;
}
.scene
{
	display:block;
	width:100%;
	height:100%;
	fill:none;
	shape-rendering:crispEdges;
}
.dim { stroke:#7c1010; }
.bright { stroke:#e01818; }
.green { stroke:#0a6a14; }
.ticks { stroke:#a8a0a0; }
.solid { stroke:#fff; stroke-width:2px; }
.solid .thin { stroke-width:1px; }
.ring { stroke:#8a8a8a; }
.mark circle { stroke:#0d8a24; }
.mark text
{
	fill:#fff;
	stroke:none;
	text-anchor:middle;
	font:12px "DejaVu Sans", sans-serif;
}
.mark .faint { fill:#c08080; }
.compass { stroke-width:4px; }

/* 钢筋显示控制面板 */
.ctrl
{
	position:absolute;
	left:10px;
	top:3px;
	width:166px;
	height:177px;
	display:flex;
	flex-direction:column;
	padding:0 1px 1px;
	background:#fff;
	box-shadow:0 0 6px #666;
}
.ctrl h3
{
	font-size:12px;
	font-weight:normal;
	line-height:30px;
	padding-left:7px;
	color:#999;
}
.opts
{
	flex:1;
	border:1px solid #828282;
	padding:3px;
}
.opts label
{
	display:flex;
	align-items:center;
	gap:4px;
	height:12px;
}
.opts input
{
	appearance:none;
	width:11px;
	height:11px;
	border:1px solid #707070;
	display:grid;
	place-items:center;
}
.opts input:checked::after
{
	content:"";
	width:6px;
	height:3px;
	border:1px solid #222;
	border-width:0 0 1px 1px;
	transform:rotate(-45deg);
}

/* 钢筋表 */
.dock
{
	display:flex;
	flex:1;
	min-height:0;
	padding-top:1px;
}
.gutter
{
	width:13px;
	flex:none;
	padding:17px 3px 0 4px;
	background:radial-gradient(circle at 2px 2px, #b0b0b0 1px, transparent 1px) 4px 18px/4px 4px content-box;
	position:relative;
}
.gutter button
{
	position:absolute;
	left:1px;
	top:2px;
	width:10px;
	height:10px;
	border:1px solid #402030;
	font-size:11px;
	line-height:8px;
}
.panel
{
	flex:1;
	min-width:0;
	display:flex;
	flex-direction:column;
}
.rowbar
{
	display:flex;
	align-items:center;
	height:28px;
	flex:none;
	background:linear-gradient(#fcfcfc, #f0f0f0);
}
.rowbar .total { margin-left:10px; }
.sheet
{
	display:flex;
	flex-direction:column;
	flex:1;
	min-height:0;
	border:1px solid #a0a0a0;
	background:#fff;
	padding:0 1px 2px 0;
}
.clip { flex:1; min-height:0; overflow:hidden; }
table
{
	table-layout:fixed;
	width:1137px;
	border-collapse:separate;
	border-spacing:0;
}
.w33 { width:33px; }
.w73 { width:73px; }
.w56 { width:56px; }
.w36 { width:36px; }
.w201 { width:201px; }
.w166 { width:166px; }
.w155 { width:155px; }
.w61 { width:61px; }
.w38 { width:38px; }
.w39 { width:39px; }
.w49 { width:49px; }
th, td
{
	border:1px solid #b4b4b4;
	border-width:0 1px 1px 0;
	overflow:hidden;
}
th
{
	font-weight:normal;
	background:linear-gradient(#fff, #ececec);
}
thead th { height:20px; }
tbody tr { height:29px; }
tbody .tall { height:61px; }
tbody .empty { height:19px; }
td
{
	padding-left:1px;
	background:#ccffd9;
}
td:nth-child(2) { border-right-color:#000; }
.empty td { background:#fff; }
td.edit { background:#ade8d8; }
th.cur { background:linear-gradient(#ffdf9c, #ffc266); color:#700020; }
td.c { text-align:center; padding:0; }
td.c svg
{
	display:inline-block;
	vertical-align:middle;
	width:12px;
	height:12px;
}
td.shape { padding:0; }
.shape svg
{
	display:block;
	width:200px;
	height:28px;
	fill:none;
	stroke:#000;
	stroke-width:2px;
}
.tall .shape svg { height:60px; }
.shape text
{
	fill:#000;
	stroke:none;
	font:10px "DejaVu Sans Mono", monospace;
	text-anchor:middle;
}
.shape .red { fill:#e01010; }
.hscroll
{
	display:flex;
	height:15px;
	flex:none;
	background:#f0f0f0;
}
.hscroll button { width:17px; display:grid; place-items:center; }
.track { flex:1; }
.thumb
{
	width:66%;
	height:100%;
	background:#cdcdcd;
}
.chev
{
	width:6px;
	height:6px;
	border:2px solid #505050;
	border-width:2px 2px 0 0;
	transform:rotate(45deg);
}
.chev.left { transform:rotate(-135deg); }

/* 状态栏 */
.status
{
	display:flex;
	gap:3px;
	height:8px;
	flex:none;
	padding-top:2px;
	overflow:hidden;
}
.status span
{
	height:22px;
	padding:2px 2px 0;
	border:1px solid #c0c0c0;
}
.s1 { width:148px; }
.s2 { width:77px; }
.s3 { width:97px; }
.s4 { width:47px; text-align:center; }
.s5 { flex:1; }
.s6 { width:68px; }

/* 输入法 */
.ime
{
	position:absolute;
	left:762px;
	top:0;
	display:flex;
}
.sogou { width:28px; height:20px; }
.ime-bar
{
	display:flex;
	align-items:center;
	gap:6px;
	height:18px;
	padding:0 2px 4px 4px;
	background:#fff;
	box-shadow:0 1px 2px #8ab;
	fill:#2472c8;
	color:#2472c8;
}
.ime-bar b { font-size:16px; }
.ime-bar svg { width:16px; height:16px; }
.ime-bar .off { fill:#b4bccb; }

/* 网速球 */
.net
{
	position:absolute;
	left:160px;
	top:36px;
	width:124px;
	height:39px;
	display:flex;
	align-items:center;
	border-radius:20px;
	background:linear-gradient(#fafafa, #dedede);
	box-shadow:0 1px 4px #777;
}
.ball
{
	width:48px;
	height:48px;
	margin-left:-3px;
	flex:none;
	border:2px solid #e8e8e8;
	border-radius:50%;
	background:radial-gradient(ellipse at 50% 4%, #9fd8b4, transparent 24%), linear-gradient(#1b7a48 38%, #43c956 38%, #3fd050);
	box-shadow:0 1px 3px #555;
	color:#fff;
	font:14px/42px "Liberation Sans", sans-serif;
	text-align:center;
}
.ball small { font-size:12px; margin-left:1px; }
.arrows, .speed
{
	display:flex;
	flex-direction:column;
	line-height:15px;
}
.arrows { margin-left:3px; font-weight:bold; }
.arrows .u { color:#e0453a; }
.arrows .d { color:#2a9a4c; }
.speed
{
	margin-left:auto;
	font:10px/15px "Noto Sans", sans-serif;
}
.net button
{
	position:relative;
	width:17px;
	height:17px;
	margin:0 6px 0 5px;
	border-radius:50%;
	background:#2f78dc;
	color:#fff;
	font:bold 16px/16px "Liberation Sans", sans-serif;
}
.net button::after
{
	content:"";
	position:absolute;
	right:-2px;
	top:-2px;
	width:8px;
	height:8px;
	border-radius:50%;
	background:#d8232a;
}

.poi
{
	position:absolute;
	right:63px;
	top:24px;
	width:52px;
	background:#fff;
	box-shadow:1px 2px 6px #999;
}
.poi-title
{
	display:flex;
	align-items:center;
	justify-content:space-between;
	height:26px;
	padding-left:3px;
	color:#999;
}
.poi-title i
{
	width:18px;
	height:20px;
	background:#e4e4e4;
}
.poi button
{
	width:100%;
	height:23px;
	border:2px solid #707070;
	border-top-color:#a0a0a0;
	border-left-color:#a0a0a0;
	background:#f0f0f0;
}
```
